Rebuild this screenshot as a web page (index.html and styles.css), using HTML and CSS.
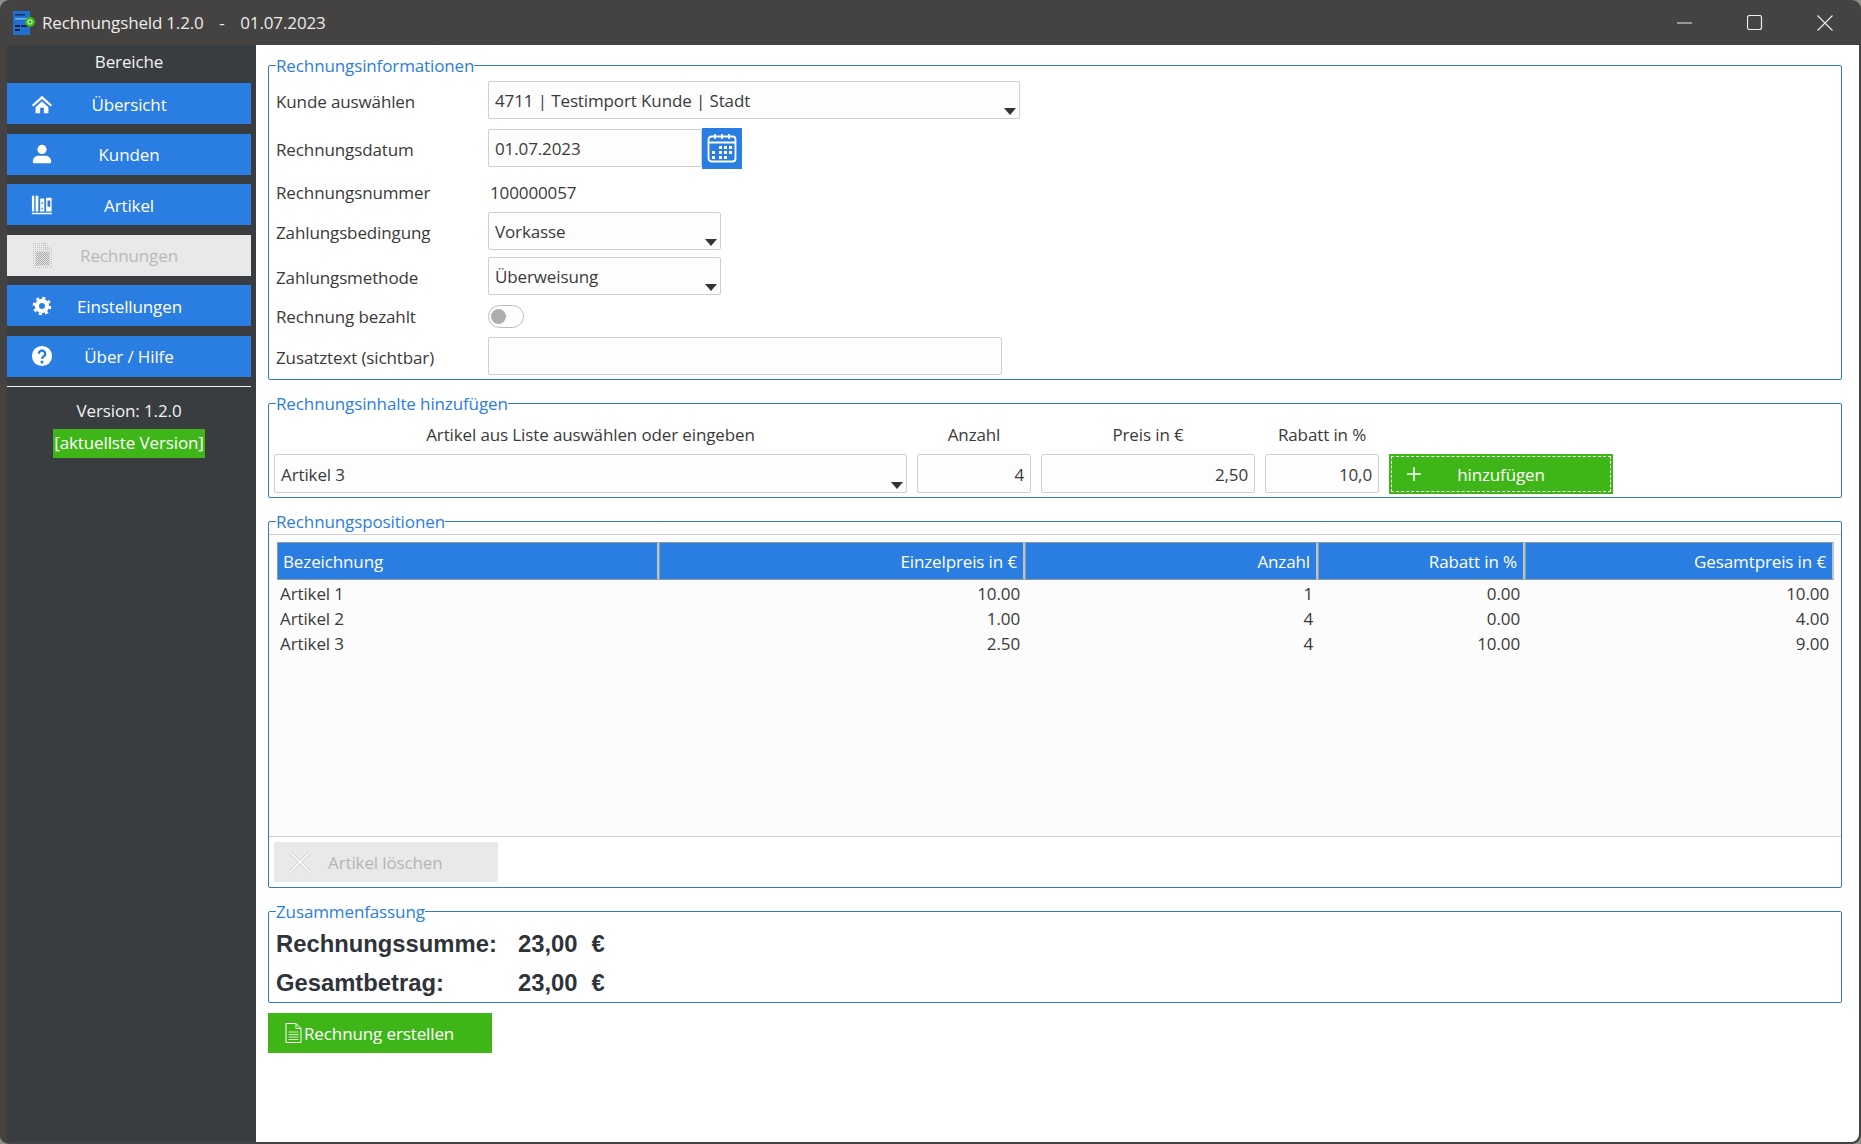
FILE: index.html
```html
<!DOCTYPE html>
<html lang="de">
<head>
<meta charset="utf-8">
<title>Rechnungsheld 1.2.0</title>
<link rel="stylesheet" href="styles.css">
</head>
<body>
<div class="window">
  <header class="titlebar">
    <svg class="app-icon" viewBox="0 0 24 26" width="24" height="26">
      <rect x="1" y="1" width="17" height="24" fill="#2170d0"/>
      <rect x="3" y="4" width="10" height="1.500" fill="#0d2f5c"/>
      <rect x="3" y="8" width="13" height="1.500" fill="#7fb2ea"/>
      <rect x="3" y="15" width="5" height="2" fill="#0d2440"/>
      <rect x="9" y="15" width="7" height="2" fill="#0d2440"/>
      <rect x="3" y="19" width="5" height="2" fill="#0d2440"/>
      <circle cx="18" cy="12" r="5" fill="#3fb618"/>
      <circle cx="18" cy="12" r="2.200" fill="none" stroke="#e8ffe0" stroke-width="1"/>
    </svg>
    <span class="app-title">Rechnungsheld 1.2.0&nbsp;&nbsp;&nbsp; - &nbsp;&nbsp;&nbsp;01.07.2023</span>
    <div class="win-controls">
      <svg width="16" height="16" viewBox="0 0 16 16"><path d="M0 8h15" stroke="#eee" fill="none"/></svg>
      <svg width="16" height="16" viewBox="0 0 16 16"><rect x=".5" y=".5" width="14" height="14" rx="2" stroke="#eee" fill="none" stroke-width="1.200"/></svg>
      <svg width="16" height="16" viewBox="0 0 16 16"><path d="M.5.5l15 15M15.500.5l-15 15" stroke="#eee" fill="none" stroke-width="1.100"/></svg>
    </div>
  </header>
  <div class="body">
    <aside class="sidebar">
      <div class="side-title">Bereiche</div>
      <nav class="nav">
        <div class="nav-btn">
          <svg class="nav-icon" viewBox="0 0 24 24"><path d="M12 3 1 13l1.600 1.800L12 6.500l9.400 8.300L23 13z"/><path d="M5 15.500 12 9l7 6.500V22h-5v-6h-4v6H5z"/></svg>
          <span>Übersicht</span>
        </div>
        <div class="nav-btn">
          <svg class="nav-icon" viewBox="0 0 24 24"><circle cx="12" cy="7" r="5"/><path d="M3 22c-1 0-1-1-1-2 0-4 4-6 6-6h8c2 0 6 2 6 6 0 1 0 2-1 2z"/></svg>
          <span>Kunden</span>
        </div>
        <div class="nav-btn">
          <svg class="nav-icon" viewBox="0 0 24 24"><path d="M1 2h2.500v17H1zM5 2h3v17H5z"/><path d="M10 5h4.500v14H10zM16.500 4h6v15h-6z"/><path d="M1 20.500h22V22H1z"/><path d="M11.500 9h1.500v2h-1.500zM11.500 15h1.500v1.500h-1.500zM18 7h3v7h-3z" fill="#2a7de1"/></svg>
          <span>Artikel</span>
        </div>
        <div class="nav-btn nav-btn-off">
          <svg class="nav-icon" viewBox="0 0 22 28">
            <defs>
              <pattern id="dots" width="2" height="2" patternUnits="userSpaceOnUse"><rect width="1" height="1" fill="#a6a6a6"/><rect x="1" y="1" width="1" height="1" fill="#a6a6a6"/></pattern>
              <pattern id="dots-light" width="2" height="2" patternUnits="userSpaceOnUse"><rect width="1" height="1" fill="#c4c4c4"/></pattern>
            </defs>
            <path d="M1 1h13l7 7v19H1z" fill="url(#dots-light)"/>
            <path d="M14 1v7h7" fill="none" stroke="#cdcdcd"/>
            <path d="M5 11h13v13H5z" fill="url(#dots)"/>
          </svg>
          <span>Rechnungen</span>
        </div>
        <div class="nav-btn">
          <svg class="nav-icon" viewBox="-1 -1 26 26"><circle cx="12" cy="12" r="6" fill="none" stroke="#fff" stroke-width="5"/><circle cx="12" cy="12" r="9.500" fill="none" stroke="#fff" stroke-width="3" stroke-dasharray="3.700 3.760"/></svg>
          <span>Einstellungen</span>
        </div>
        <div class="nav-btn">
          <svg class="nav-icon" viewBox="0 0 24 24"><circle cx="12" cy="12" r="11"/><path d="M8.500 9.500a3.500 3.500 0 1 1 5.300 3c-1.300.8-1.800 1.300-1.800 2.500" fill="none" stroke="#2a7de1" stroke-width="2.600"/><circle cx="12" cy="18.500" r="1.700" fill="#2a7de1"/></svg>
          <span>Über / Hilfe</span>
        </div>
      </nav>
      <hr class="side-rule">
      <div class="version">Version: 1.2.0</div>
      <div class="badge">[aktuellste Version]</div>
    </aside>
    <main class="main">
      <fieldset class="group group-info">
        <legend>Rechnungsinformationen</legend>
        <div class="row row-38">
          <div class="label">Kunde auswählen</div>
          <div class="field select w-532">4711 | Testimport Kunde | Stadt</div>
        </div>
        <div class="row row-38 gap-10">
          <div class="label">Rechnungsdatum</div>
          <div class="field w-214">01.07.2023</div>
          <div class="cal-btn">
            <svg viewBox="0 0 30 30" width="30" height="30">
              <rect x="1.500" y="3.500" width="27" height="25" rx="3" fill="none" stroke="#fff" stroke-width="1.800"/>
              <path d="M1.500 9.500h27M8 1v5M15 1v5M22 1v5" stroke="#fff" stroke-width="1.800" fill="none"/>
              <path d="M12 13h3v3h-3zM17 13h3v3h-3zM22 13h3v3h-3zM5 18h3v3H5zM12 18h3v3h-3zM17 18h3v3h-3zM22 18h3v3h-3zM5 23h3v3H5zM12 23h3v3h-3zM17 23h3v3h-3z" fill="#fff"/>
            </svg>
          </div>
        </div>
        <div class="row row-number">
          <div class="label">Rechnungsnummer</div>
          <div class="value">100000057</div>
        </div>
        <div class="row row-38">
          <div class="label">Zahlungsbedingung</div>
          <div class="field select w-233">Vorkasse</div>
        </div>
        <div class="row row-38 gap-7">
          <div class="label">Zahlungsmethode</div>
          <div class="field select w-233">Überweisung</div>
        </div>
        <div class="row row-toggle">
          <div class="label">Rechnung bezahlt</div>
          <div class="toggle"><span class="knob"></span></div>
        </div>
        <div class="row row-38 gap-9">
          <div class="label">Zusatztext (sichtbar)</div>
          <div class="field w-514"></div>
        </div>
      </fieldset>

      <fieldset class="group group-add">
        <legend>Rechnungsinhalte hinzufügen</legend>
        <div class="add-grid">
          <div class="add-head">Artikel aus Liste auswählen oder eingeben</div>
          <div class="add-head">Anzahl</div>
          <div class="add-head">Preis in €</div>
          <div class="add-head">Rabatt in %</div>
          <div></div>
          <div class="field select">Artikel 3</div>
          <div class="field num">4</div>
          <div class="field num">2,50</div>
          <div class="field num">10,0</div>
          <div class="add-btn">
            <svg viewBox="0 0 16 16" width="16" height="16"><path d="M8 1v14M1 8h14" stroke="#fff" stroke-width="1.500" fill="none"/></svg>
            <span>hinzufügen</span>
          </div>
        </div>
      </fieldset>

      <fieldset class="group group-list">
        <legend>Rechnungspositionen</legend>
        <div class="panel">
          <table class="items">
            <colgroup><col class="c1"><col class="c2"><col class="c3"><col class="c4"><col class="c5"></colgroup>
            <thead>
              <tr><th class="left">Bezeichnung</th><th>Einzelpreis in €</th><th>Anzahl</th><th>Rabatt in %</th><th>Gesamtpreis in €</th></tr>
            </thead>
            <tbody>
              <tr><td class="left">Artikel 1</td><td>10.00</td><td>1</td><td>0.00</td><td>10.00</td></tr>
              <tr><td class="left">Artikel 2</td><td>1.00</td><td>4</td><td>0.00</td><td>4.00</td></tr>
              <tr><td class="left">Artikel 3</td><td>2.50</td><td>4</td><td>10.00</td><td>9.00</td></tr>
            </tbody>
          </table>
        </div>
        <div class="del-btn">
          <svg viewBox="0 0 24 24" width="24" height="24"><path d="M2 2l20 20M22 2L2 22" stroke="#cfcfcf" stroke-width="3.400" fill="none"/><path d="M2 2l20 20M22 2L2 22" stroke="#f6f6f6" stroke-width="1.800" fill="none"/></svg>
          <span>Artikel löschen</span>
        </div>
      </fieldset>

      <fieldset class="group group-sum">
        <legend>Zusammenfassung</legend>
        <div class="sum-row"><span class="sum-label">Rechnungssumme:</span><span class="sum-value">23,00</span><span>€</span></div>
        <div class="sum-row"><span class="sum-label">Gesamtbetrag:</span><span class="sum-value">23,00</span><span>€</span></div>
      </fieldset>

      <div class="create-btn">
        <svg viewBox="0 0 17 20" width="17" height="20"><path d="M1 .500h10l5 5v14H1z" fill="none" stroke="#fff"/><path d="M11 .500v5h5" fill="none" stroke="#fff"/><path d="M3.500 9h10M3.500 11.500h10M3.500 14h10M3.500 16.500h10" stroke="#d5efc9" fill="none"/></svg>
        <span>Rechnung erstellen</span>
      </div>
    </main>
  </div>
</div>
</body>
</html>
```
FILE: styles.css
```css
* { box-sizing: border-box; }
html, body { margin: 0; height: 100%; }
body {
  background: #8f8f8b;
  font-family: "Open Sans", "Noto Sans", sans-serif;
  font-size: 17px;
  letter-spacing: -0.12px;
  color: #3a3a3a;
  overflow: hidden;
}
.window {
  height: 1144px;
  background: #444341;
  border-radius: 9px;
  overflow: hidden;
  display: flex;
  flex-direction: column;
  padding: 0 2px 2px 0;
}
.titlebar {
  height: 45px;
  flex: none;
  display: flex;
  align-items: center;
  padding-left: 12px;
  margin-right: -2px;
  color: #ececec;
}
.app-icon { flex: none; margin-right: 6px; }
.app-title { word-spacing: -0.4px; }
.win-controls {
  margin-left: auto;
  display: flex;
  align-items: center;
  gap: 54px;
  padding-right: 28px;
}
.body { flex: 1; display: flex; min-height: 0; }
.sidebar {
  width: 256px;
  flex: none;
  background: #3a3d3f;
  border-left: 7px solid #444341;
  padding-right: 5px;
  color: #f2f2f2;
  text-align: center;
}
.side-title { height: 38px; line-height: 34px; }
.nav { display: flex; flex-direction: column; gap: 9.500px; }
.nav-btn {
  height: 41px;
  background: #2a7de1;
  color: #fff;
  display: grid;
  grid-template-columns: 70px 1fr 70px;
  align-items: center;
}
.nav-btn span { padding-top: 1px; }
.nav-btn-off { background: #e9e9e9; color: #b9b9b9; }
.nav-icon { width: 22px; height: 22px; fill: #fff; justify-self: center; }
.nav-btn-off .nav-icon { height: 28px; }
.side-rule { border: 0; height: 1px; background: #f2f2f2; margin: 9.500px 0 0; }
.version { margin-top: 8.500px; height: 30px; line-height: 30px; }
.badge {
  display: inline-block;
  margin-top: 3px;
  width: 152px;
  height: 29px;
  line-height: 28px;
  background: #3fb618;
  color: #fff;
  white-space: nowrap;
}
.main {
  flex: 1;
  min-width: 0;
  background: #fff;
  padding: 8px 17px 0 12px;
  border-bottom-right-radius: 8px;
}
.group {
  margin: 0 0 11px;
  padding: 0 3px;
  border: 1px solid #2f7bcf;
  border-radius: 2px;
  min-width: 0;
}
.group legend {
  margin-left: 0;
  padding: 0;
  height: 24px;
  line-height: 25px;
  color: #2a7de1;
}
.group-info { padding: 4px 7px 3px; height: 327px; }
.row { display: flex; align-items: center; }
.row-38 { height: 38px; }
.row-38 .label { padding-top: 2px; }
.row-number { height: 45px; padding-top: 5px; }
.row-toggle { height: 23px; margin-top: 10px; }
.gap-10 { margin-top: 10px; }
.gap-7 { margin-top: 7px; }
.gap-9 { margin-top: 9px; }
.label { width: 212px; flex: none; }
.value { padding-left: 2px; }
.field {
  height: 38px;
  line-height: 38px;
  background: #fdfdfd;
  border: 1px solid #cfcfcf;
  border-radius: 2px;
  padding: 0 6px;
  position: relative;
}
.w-532 { width: 532px; }
.w-214 { width: 214px; }
.w-233 { width: 233px; }
.w-514 { width: 514px; }
.select::after {
  content: "";
  position: absolute;
  right: 3px;
  bottom: 3px;
  border-left: 6.500px solid transparent;
  border-right: 6.500px solid transparent;
  border-top: 7px solid #333;
}
.cal-btn {
  width: 40px;
  height: 41px;
  background: #2a7de1;
  display: flex;
  align-items: center;
  justify-content: center;
}
.toggle {
  width: 36px;
  height: 23px;
  border: 1px solid #bdbdbd;
  border-radius: 12px;
  background: #fdfdfd;
  display: flex;
  align-items: center;
  padding-left: 2px;
}
.knob { width: 15px; height: 15px; border-radius: 50%; background: #adadad; }
.group-add { height: 107px; padding: 0 5px; }
.group-add legend { margin-left: 2px; }
.add-grid {
  display: grid;
  grid-template-columns: 633px 114px 214px 114px 224px;
  grid-template-rows: 32px 39px;
  column-gap: 10px;
  row-gap: 4px;
  padding-top: 3px;
  align-items: center;
}
.add-head { text-align: center; }
.add-grid .field { height: 39px; line-height: 39px; }
.num { text-align: right; }
.add-btn {
  height: 40px;
  background: #3fb618;
  color: #fff;
  outline: 1px dashed #fff;
  outline-offset: -3px;
  display: grid;
  grid-template-columns: 50px 1fr 50px;
  align-items: center;
  justify-items: center;
}
.add-btn span { padding-top: 1px; }
.group-list { padding: 0; height: 379px; }
.group-list legend { margin-left: 7px; }
.panel {
  margin-top: 1px;
  height: 303px;
  background: #fcfcfc;
  border-top: 1px solid #cfcfcf;
  border-bottom: 1px solid #cfcfcf;
  padding: 7px 6px 0 8px;
}
.items { border-collapse: separate; border-spacing: 0; table-layout: fixed; width: 1557px; }
.c1 { width: 382px; }
.c2 { width: 366px; }
.c3 { width: 293px; }
.c4 { width: 207px; }
.c5 { width: 309px; }
.items th {
  height: 38px;
  padding: 0 6px 0 5px;
  background: #2a7de1;
  color: #fff;
  font-weight: 400;
  text-align: right;
  border-top: 1px solid #8d99a6;
  border-bottom: 1px solid #8d99a6;
  border-left: 1px solid #8d99a6;
  border-right: 2px solid #bcc3cb;
}
.items th.left { text-align: left; }
.items td {
  height: 25px;
  padding: 0 5px 0 3px;
  text-align: right;
  white-space: nowrap;
}
.items tbody tr:first-child td { height: 26px; }
.items td.left { text-align: left; }
.del-btn {
  width: 224px;
  height: 40px;
  margin: 5px 0 0 5px;
  background: #e9e9e9;
  color: #b5b5b5;
  border-radius: 2px;
  display: flex;
  align-items: center;
  gap: 16px;
  padding-left: 14px;
}
.group-sum { height: 104px; padding: 2px 7px 0; margin-bottom: 10px; }
.sum-row {
  height: 37px;
  margin-bottom: 2px;
  display: flex;
  align-items: center;
  font-family: "Liberation Sans", Arial, sans-serif;
  font-weight: 700;
  font-size: 23.800px;
  letter-spacing: 0;
  color: #2f333a;
}
.sum-label { width: 242px; flex: none; }
.sum-value { margin-right: 14px; }
.create-btn {
  width: 224px;
  height: 40px;
  background: #3fb618;
  color: #fff;
  display: flex;
  align-items: center;
  gap: 2px;
  padding-left: 17px;
}
```
